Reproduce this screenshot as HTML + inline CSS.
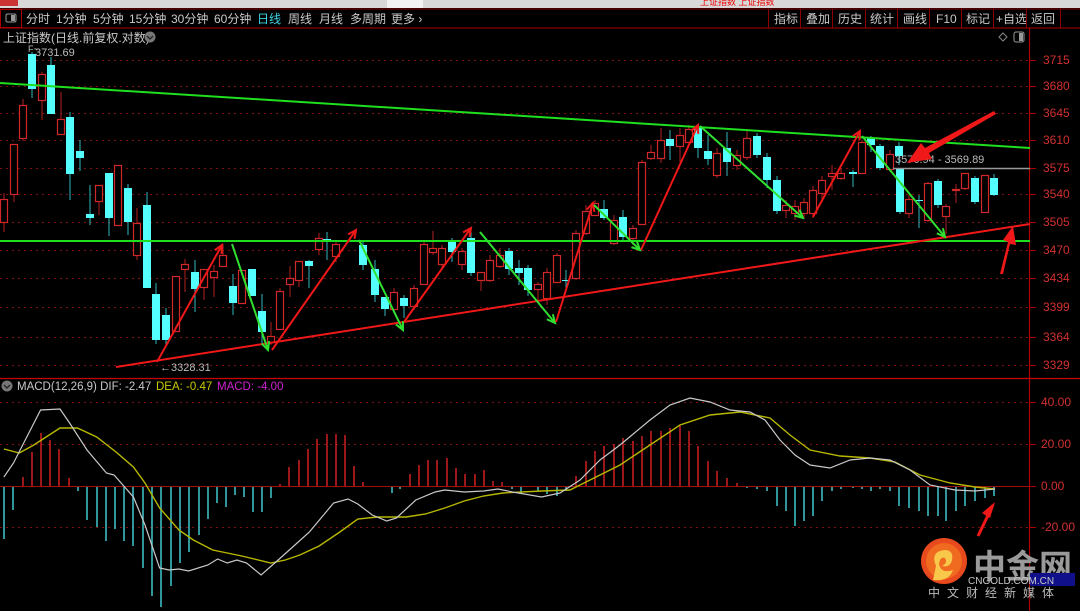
<!DOCTYPE html>
<html><head><meta charset="utf-8">
<style>
html,body{margin:0;padding:0;background:#000;width:1080px;height:611px;overflow:hidden;font-family:"Liberation Sans","Noto Sans CJK SC",sans-serif}
svg{display:block}
text{font-family:"Liberation Sans","Noto Sans CJK SC",sans-serif}
</style></head><body>
<svg id="s" width="1080" height="611" xmlns="http://www.w3.org/2000/svg">
<rect width="1080" height="611" fill="#000"/>
<rect x="0" y="0" width="1080" height="8" fill="#d8d8d8"/>
<rect x="0" y="0" width="18" height="6" fill="#c33"/>
<rect x="387" y="0" width="36" height="8" fill="#f2f2f2"/>
<text x="700" y="5" font-size="9" fill="#e00">上证指数 上证指数</text>
<rect x="0" y="8" width="1080" height="20" fill="#000"/>
<line x1="0" y1="9" x2="1080" y2="9" stroke="#8b0000" stroke-width="1"/>
<line x1="0" y1="28" x2="1080" y2="28" stroke="#8b0000" stroke-width="1.2"/>
<rect x="0.5" y="9.5" width="21" height="18" fill="none" stroke="#a00" />
<rect x="6" y="14" width="10" height="8" rx="1.5" fill="none" stroke="#999"/>
<rect x="11" y="15" width="4" height="6" fill="#999"/>
<g font-size="12" fill="#c8c8c8">
<text x="26" y="23">分时</text><text x="56" y="23">1分钟</text><text x="93" y="23">5分钟</text><text x="129" y="23">15分钟</text><text x="171" y="23">30分钟</text><text x="214" y="23">60分钟</text>
<text x="257" y="23" fill="#3fd6e6">日线</text><text x="288" y="23">周线</text><text x="319" y="23">月线</text><text x="350" y="23">多周期</text><text x="391" y="23">更多 ›</text>
<text x="774" y="23">指标</text><text x="806" y="23">叠加</text><text x="838" y="23">历史</text><text x="870" y="23">统计</text><text x="903" y="23">画线</text><text x="936" y="23">F10</text><text x="966" y="23">标记</text><text x="996" y="23">+自选</text><text x="1031" y="23">返回</text>
</g>
<g stroke="#8b0000">
<line x1="768.5" y1="9" x2="768.5" y2="28"/><line x1="800.5" y1="9" x2="800.5" y2="28"/><line x1="832.5" y1="9" x2="832.5" y2="28"/><line x1="865.5" y1="9" x2="865.5" y2="28"/><line x1="897.5" y1="9" x2="897.5" y2="28"/><line x1="929.5" y1="9" x2="929.5" y2="28"/><line x1="961.5" y1="9" x2="961.5" y2="28"/><line x1="993.5" y1="9" x2="993.5" y2="28"/><line x1="1026.5" y1="9" x2="1026.5" y2="28"/><line x1="1060.5" y1="9" x2="1060.5" y2="28"/>
</g>
<text x="3" y="42" font-size="12" fill="#c8c8c8">上证指数(日线.前复权.对数)</text>
<circle cx="150" cy="37" r="5.5" fill="#777"/><path d="M147 36 l3 3 l3 -3" stroke="#222" fill="none" stroke-width="1.3"/>
<path d="M1003 33 l4 4 l-4 4 l-4 -4z" fill="none" stroke="#888"/>
<rect x="1014" y="32" width="10" height="10" rx="2" fill="none" stroke="#999"/><rect x="1019" y="33" width="4" height="8" fill="#999"/>
<line x1="1029.5" y1="28" x2="1029.5" y2="611" stroke="#a00" stroke-width="1.2"/>
<line x1="0" y1="378.5" x2="1080" y2="378.5" stroke="#c00" stroke-width="1.2"/>
<g id="grid" stroke="#7a1010" stroke-dasharray="2,4"></g>
<g id="axl" font-size="12" fill="#d23030"></g>
<g id="candles"></g>
<g id="hist"></g>
<line x1="0" y1="83" x2="1030" y2="148" stroke="#1ee01e" stroke-width="2"/>
<line x1="0" y1="241" x2="1030" y2="241" stroke="#1ee01e" stroke-width="2"/>
<line x1="116" y1="367" x2="1030" y2="224" stroke="#f01818" stroke-width="2"/>
<line x1="893" y1="168.5" x2="1030" y2="168.5" stroke="#999" stroke-width="1.5"/>
<text x="895" y="163" font-size="11" fill="#bbb">3576.94 - 3569.89</text>
<text x="35" y="56" font-size="11" fill="#bbb">3731.69</text>
<text x="28" y="52" font-size="9" fill="#bbb">F~</text>
<text x="160" y="371" font-size="11" fill="#bbb">←3328.31</text>
<g id="arrows" stroke-width="2" fill="none"></g>
<path d="M994 111 L996 114 L929 153 L932 159 L907 163 L921 143 L925 148 Z" fill="#f01818"/>
<path d="M1000 274 L1003 274 L1010 244 L1016 245 L1013 226 L1003 240 L1008 242 Z" fill="#f01818"/>
<path d="M993 505 L978 536" stroke="#f01818" stroke-width="3"/>
<path d="M995 502 L982 513 L990 518 Z" fill="#f01818"/>
<circle cx="7" cy="386" r="5.5" fill="#777"/><path d="M4 385 l3 3 l3 -3" stroke="#222" fill="none" stroke-width="1.3"/>
<text x="17" y="390" font-size="11.5" fill="#c8c8c8">MACD(12,26,9)  DIF: -2.47</text>
<text x="156" y="390" font-size="11.5" fill="#c8c800">DEA: -0.47</text>
<text x="217" y="390" font-size="11.5" fill="#d020d0">MACD: -4.00</text>
<g id="curves" fill="none"></g>
<circle cx="944" cy="561" r="23" fill="#e84a1e"/>
<circle cx="944" cy="561" r="18" fill="#f06a20"/>
<path d="M936 566 q-6 -14 8 -16 q10 0 8 10 q-2 8 -10 6 q6 -3 3 -8 q-5 -2 -6 6 q2 10 14 6 q-4 12 -20 10z" fill="#f8c84a"/>
<text x="973" y="578" font-size="33" font-weight="bold" fill="#9a9a9a" font-family="'Noto Sans CJK SC',sans-serif">中金网</text>
<rect x="1030" y="573" width="45" height="13" fill="#10108a"/>
<text x="968" y="584" font-size="10" fill="#c8c8c8">CNGOLD.COM.CN</text>
<text x="928" y="597" font-size="12" fill="#bbb" letter-spacing="7">中文财经新媒体</text>
</svg>
<script>
var NS="http://www.w3.org/2000/svg";
function el(p,t,a){var e=document.createElementNS(NS,t);for(var k in a)e.setAttribute(k,a[k]);document.getElementById(p).appendChild(e);return e;}
[[60,"3715"],[86,"3680"],[113,"3645"],[140,"3610"],[168,"3575"],[194,"3540"],[222,"3505"],[250,"3470"],[278,"3434"],[307,"3399"],[337,"3364"],[365,"3329"]].forEach(function(a){
el("grid","line",{x1:0,y1:a[0]+.5,x2:1029,y2:a[0]+.5});
el("grid","line",{x1:1030,y1:a[0]+.5,x2:1036,y2:a[0]+.5,"stroke-dasharray":"none",stroke:"#a00"});
var t=el("axl","text",{x:1043,y:a[0]+4});t.textContent=a[1];});
[[402,"40.00"],[444,"20.00"],[486,"0.00"],[527,"-20.00"]].forEach(function(a){
el("grid","line",{x1:0,y1:a[0]+.5,x2:1029,y2:a[0]+.5});
el("grid","line",{x1:1030,y1:a[0]+.5,x2:1036,y2:a[0]+.5,"stroke-dasharray":"none",stroke:"#a00"});
var t=el("axl","text",{x:1041,y:a[0]+4});t.textContent=a[1];});
var C=[[4,199,222,'r',193,232],[14,144,194,'r',144,202],[23,105,138,'r',99,141],[32,54,89,'c',52,98],[42,74,100,'r',72,120],[51,65,114,'c',57,114],[61,119,134,'r',92,134],[70,117,174,'c',112,200],[80,151,158,'c',140,171],[90,214,218,'c',185,225],[99,185,201,'r',185,215],[109,173,218,'c',173,236],[118,165,225,'r',165,225],[128,188,222,'c',184,235],[137,223,255,'r',208,260],[147,205,288,'c',192,288],[156,294,340,'c',283,344],[166,315,340,'c',308,345],[176,276,331,'r',276,331],[185,264,269,'r',259,292],[195,272,289,'c',260,312],[204,269,287,'r',269,300],[214,271,277,'r',265,297],[223,255,266,'r',244,266],[233,286,303,'c',274,315],[242,270,303,'r',270,303],[252,269,296,'c',269,296],[262,311,332,'c',294,344],[271,336,342,'r',322,345],[280,291,329,'r',288,329],[290,278,284,'r',266,297],[299,261,280,'r',261,287],[309,261,266,'c',260,288],[319,238,249,'r',233,255],[327,239,241,'c',232,260],[336,244,256,'r',240,262],
[363,245,265,'c',240,270],[375,269,295,'c',260,302],[385,297,309,'c',297,316],[394,292,309,'r',288,310],[404,298,306,'c',295,318],[414,288,306,'r',285,310],[424,244,284,'r',240,285],[433,248,252,'r',231,255],[442,248,264,'r',245,270],[452,240,252,'c',238,262],[462,251,264,'r',248,270],[471,238,273,'c',232,276],[481,272,280,'r',272,291],[490,260,280,'r',255,282],[500,255,266,'r',248,268],[509,251,269,'c',248,275],[519,268,273,'c',260,285],[528,268,290,'c',265,296],[538,284,289,'r',282,300],[547,272,298,'r',268,305],[557,255,282,'r',253,282],[566,280,281,'c',270,290],[576,233,278,'r',230,280],[586,211,233,'r',205,235],[595,203,215,'r',200,216],[604,209,218,'c',200,220],[614,220,243,'r',215,245],[623,217,237,'c',210,240],[633,228,238,'r',225,245],[642,162,224,'r',160,225],[651,152,158,'r',145,160],[661,140,158,'r',128,163],[670,139,146,'c',130,160],[680,135,146,'r',128,162],[689,129,142,'r',125,145],[698,128,148,'c',125,158],[708,151,159,'c',135,165],[717,153,175,'r',148,178],
[727,148,162,'c',132,176],[737,155,165,'r',150,170],[747,138,157,'r',130,160],[757,136,155,'c',133,158],[767,157,180,'c',153,188],[777,180,211,'c',176,214],[786,205,210,'r',200,218],[795,206,213,'r',200,220],[804,202,213,'r',198,218],[813,190,213,'r',186,218],[822,180,193,'r',176,200],[832,173,176,'r',165,190],[841,173,178,'r',168,180],[853,172,174,'c',170,187],[862,142,173,'r',140,174],[871,138,145,'c',136,152],[880,146,168,'c',144,170],[890,154,169,'r',150,172],[899,146,156,'c',142,165],[900,169,212,'c',169,214],[909,199,213,'r',195,218],[919,200,201,'c',195,228],[928,183,220,'r',182,222],[938,181,205,'c',179,208],[946,206,216,'r',204,234],[956,189,190,'r',184,203],[965,173,188,'r',173,190],[975,178,202,'c',176,204],[985,175,212,'r',175,213],[994,178,195,'c',174,196]];
C.forEach(function(c){
var col=c[3]=='r'?'#d02828':'#54ffff';
el("candles","line",{x1:c[0],y1:c[4],x2:c[0],y2:c[5],stroke:c[3]=='r'?'#b02020':'#2fb8c0'});
var h=Math.max(1,c[2]-c[1]);
if(c[3]=='r')el("candles","rect",{x:c[0]-3.5,y:c[1]+.5,width:7,height:h,fill:"#000",stroke:col,"stroke-width":1.2});
else el("candles","rect",{x:c[0]-4,y:c[1],width:8,height:h,fill:col});
});
function arrow(x1,y1,x2,y2,col){
el("arrows","line",{x1:x1,y1:y1,x2:x2,y2:y2,stroke:col});
var a=Math.atan2(y2-y1,x2-x1),L=9,w=.45;
el("arrows","path",{d:"M"+(x2-L*Math.cos(a-w))+" "+(y2-L*Math.sin(a-w))+" L"+x2+" "+y2+" L"+(x2-L*Math.cos(a+w))+" "+(y2-L*Math.sin(a+w)),stroke:col});
}
var R="#f01818",G="#30e030";
arrow(157,362,222,245,R);arrow(232,244,268,350,G);arrow(272,350,356,230,R);arrow(359,240,403,330,G);
arrow(404,322,471,228,R);arrow(480,232,555,323,G);arrow(556,322,593,203,R);arrow(594,205,640,250,G);
arrow(641,250,698,125,R);arrow(700,126,803,218,G);arrow(813,217,860,131,R);arrow(862,136,945,237,G);
var H=[[4,-53],[13,-24],[23,9],[32,34],[41,53],[50,46],[59,37],[69,8],[78,-5],[87,-34],[97,-41],[106,-55],[115,-43],[124,-55],[133,-60],[143,-82],[152,-110],[161,-121],[171,-100],[180,-77],[189,-66],[199,-49],[208,-33],[217,-17],[226,-21],[235,-9],[244,-11],[253,-26],[262,-26],[271,-12],[280,2],[289,19],[299,26],[308,37],[317,47],[327,52],[336,52],[345,51],[354,20],[363,4],[392,-7],[400,-3],[410,12],[419,21],[428,26],[437,26],[447,28],[456,18],[465,12],[475,12],[484,16],[493,5],[502,4],[512,-3],[521,-8],
[538,-5],[547,-8],[557,-10],[566,-5],[576,10],[586,25],[595,35],[604,40],[614,42],[623,48],[633,45],[642,50],[651,55],[661,55],[670,58],[680,60],[689,55],[698,40],[708,25],[717,15],[727,8],[737,3],[747,-2],[757,-3],[767,-5],[777,-20],[786,-25],[795,-40],[804,-35],[813,-30],[822,-15],[832,-5],[841,-3],[853,-2],[862,-3],[871,-5],[880,-3],[890,-5],[899,-20],[909,-22],[919,-25],[928,-30],[938,-30],[946,-35],[956,-25],[965,-20],[975,-15],[985,-12],[994,-10]];
H.forEach(function(h){
el("hist","line",{x1:h[0],y1:486,x2:h[0],y2:486-h[1],stroke:h[1]>0?'#d02020':'#40c8d0',"stroke-width":1.5});
});
el("hist","line",{x1:0,y1:486.5,x2:1029,y2:486.5,stroke:"#a01010","stroke-width":1});
function sc(a){return a.map(function(p){return [p[0]*0.967,p[1]]});}
var W=sc([[4,477],[14,463],[42,410],[62,409],[72,423],[90,450],[110,473],[118,475],[138,497],[150,525],[165,568],[175,570],[185,569],[195,571],[215,565],[225,559],[235,563],[245,560],[255,563],[270,575],[290,558],[305,545],[320,532],[345,503],[360,499],[370,504],[385,515],[400,521],[410,518],[430,500],[450,492],[460,490],[480,492],[500,491],[515,489],[530,492],[560,497]]).concat([[560,493],[580,480],[600,460],[620,445],[650,420],[670,405],[690,398],[710,402],[730,410],[750,412],[765,420],[780,440],[795,455],[810,465],[830,468],[850,460],[870,458],[890,460],[910,470],[930,485],[955,490],[975,491],[995,489]]);
var Y=sc([[4,449],[20,453],[35,445],[62,428],[80,428],[100,437],[120,452],[138,467],[150,483],[165,508],[185,530],[200,540],[220,550],[250,556],[280,563],[295,560],[310,555],[330,546],[350,533],[370,519],[390,517],[420,517],[440,514],[460,508],[480,501],[500,496],[520,493],[560,491]]).concat([[570,490],[590,480],[620,465],[650,445],[680,425],[710,415],[740,412],[770,418],[790,435],[810,450],[840,456],[870,458],[895,462],[920,475],[950,483],[975,487],[995,489]]);
function pth(a){return "M"+a.map(function(p){return p[0].toFixed(1)+" "+p[1]}).join(" L");}
el("curves","path",{d:pth(Y),stroke:"#b8b800","stroke-width":1.4});
el("curves","path",{d:pth(W),stroke:"#c8c8c8","stroke-width":1.2});
</script>
</body></html>
